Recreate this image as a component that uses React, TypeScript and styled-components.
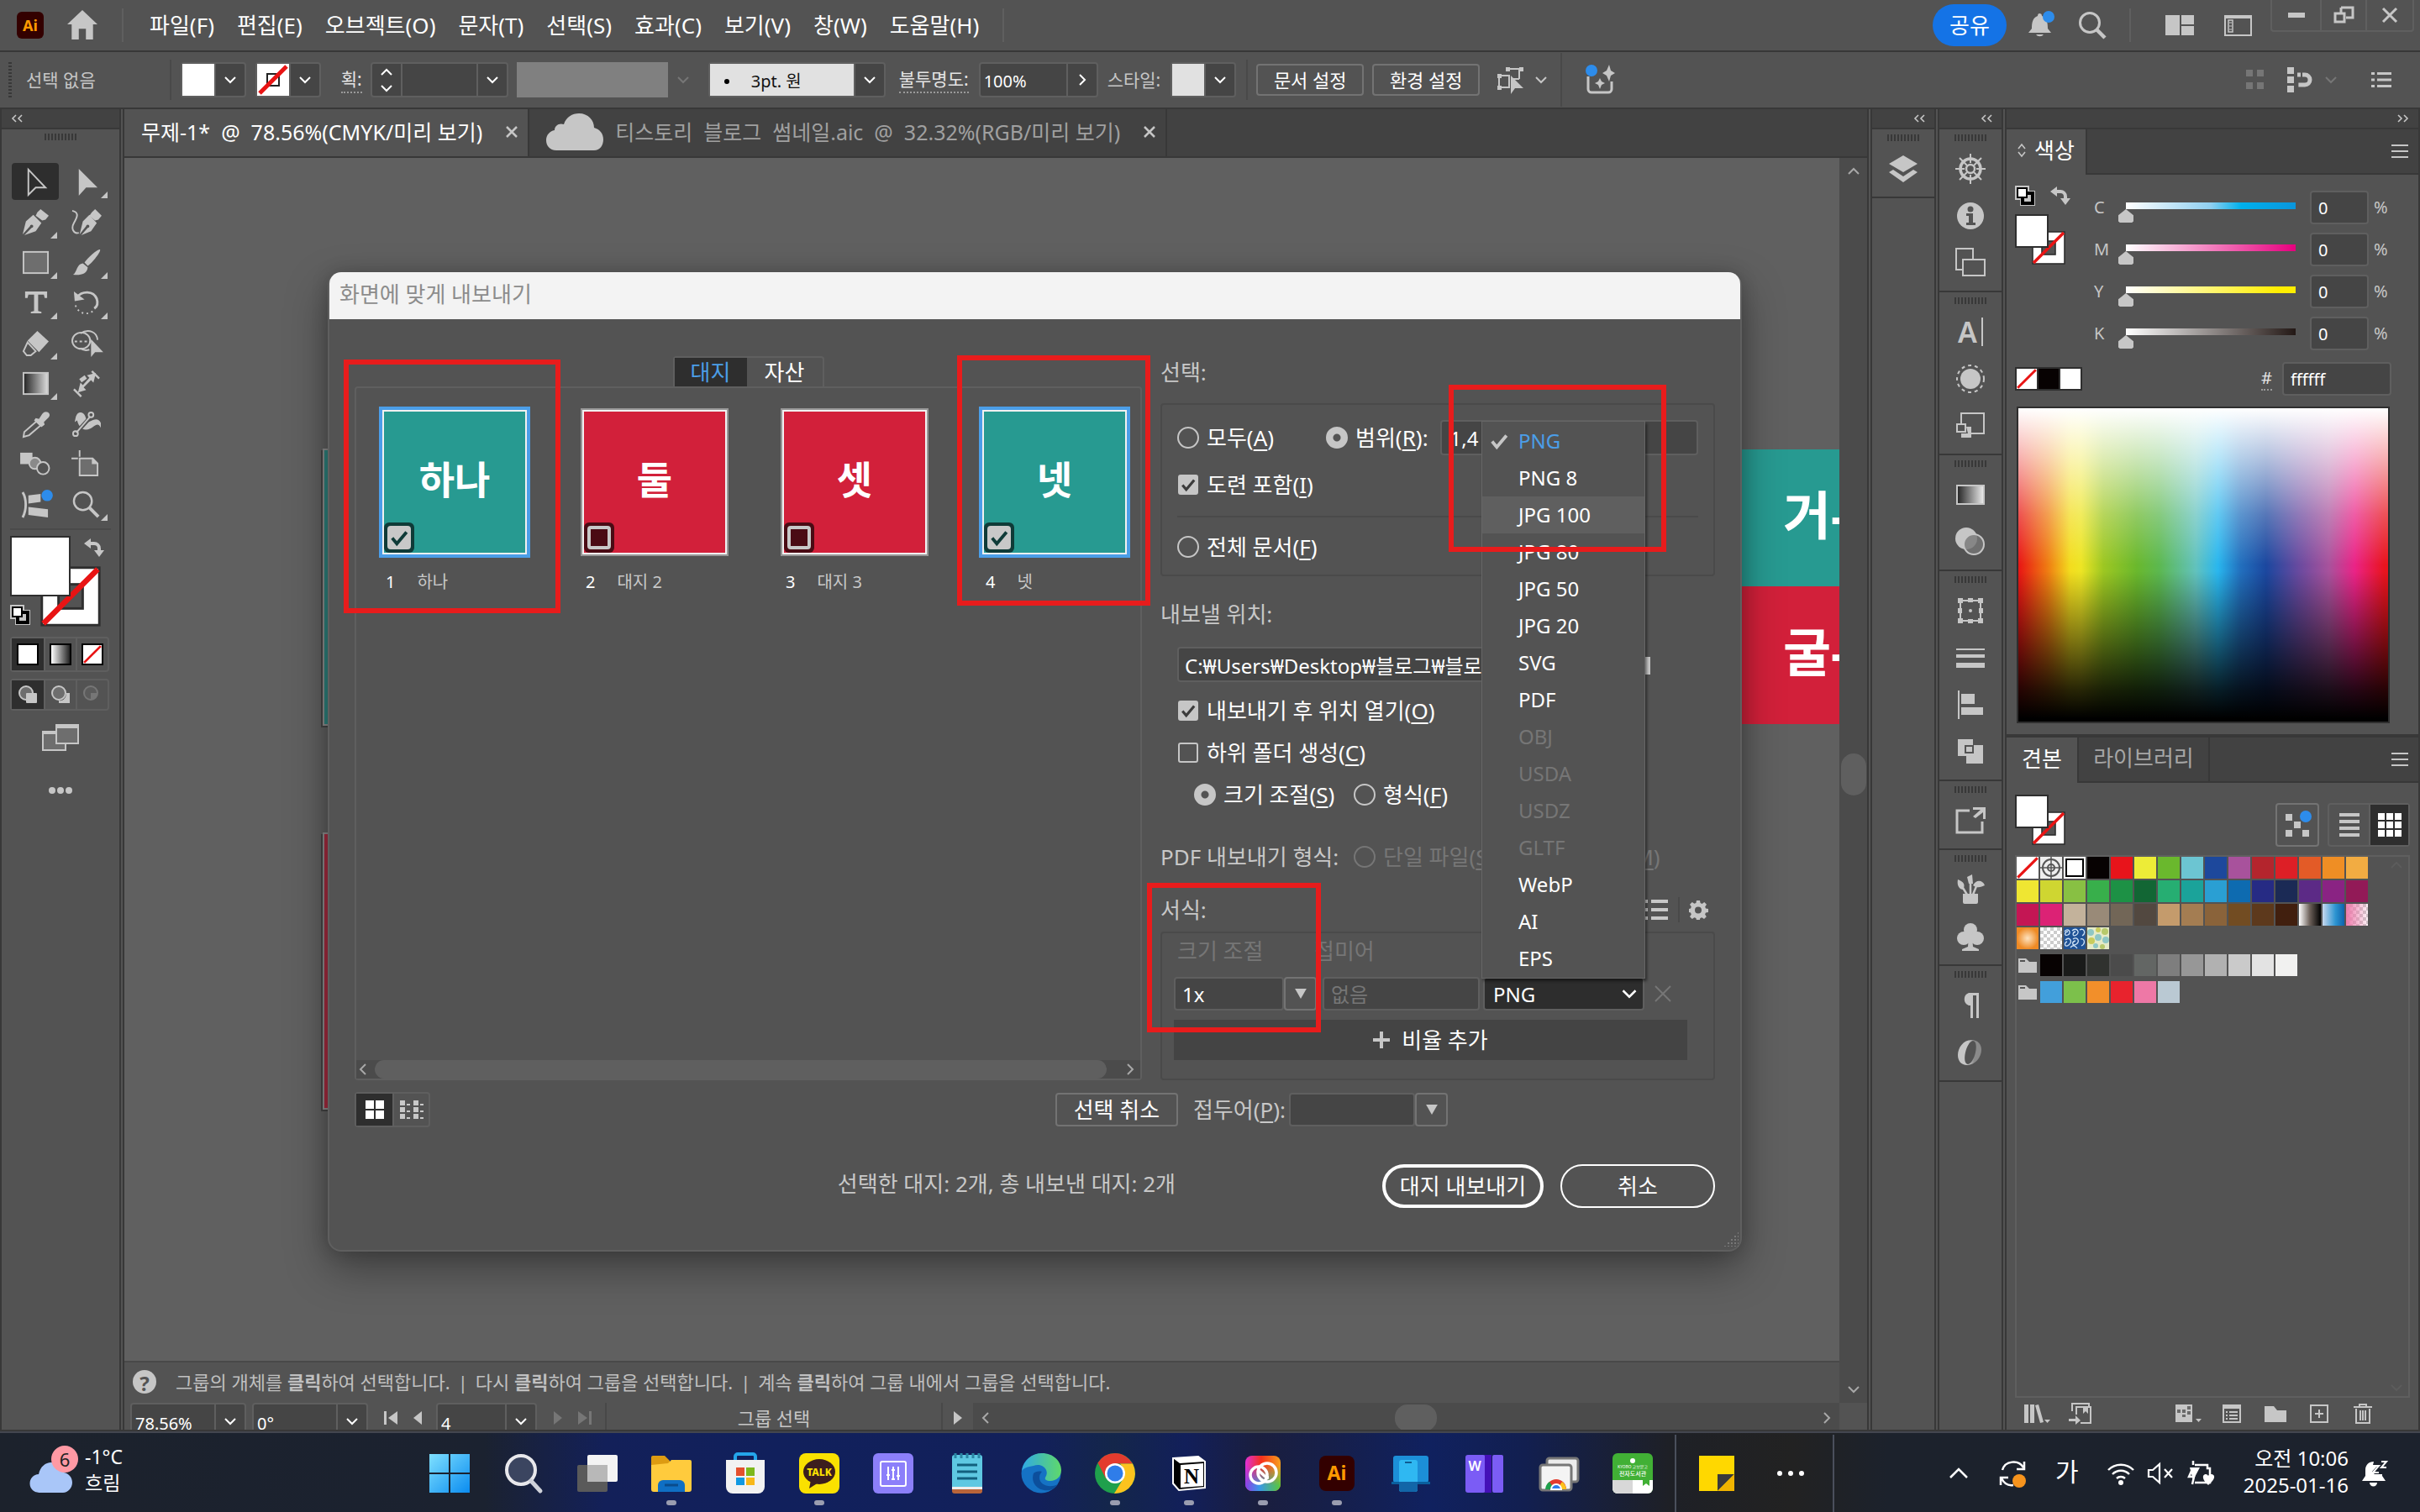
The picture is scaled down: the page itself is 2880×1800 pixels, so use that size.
import React, { useState } from 'react';
import styled, { createGlobalStyle, css } from 'styled-components';

/* ---------- theme ---------- */
const c = {
  panel: '#535353',
  dark: '#424242',
  field: '#454545',
  line: '#383838',
  edge: '#5f5f5f',
  edgeLight: '#737373',
  canvas: '#606060',
  track: '#4b4b4b',
  pressed: '#2e2e2e',
  icon: '#c6c6c6',
  label: '#c8c8c8',
  dim: '#767676',
  white: '#ffffff',
  teal: '#279a91',
  crimson: '#d2203a',
  accent: '#4b9ee8',
  marker: '#e81c1c',
};
const font = `"Noto Sans", "Noto Sans CJK KR", sans-serif`;

const Global = createGlobalStyle`
  *, *::before, *::after { box-sizing: border-box; }
  body { margin: 0; background: ${c.panel}; font-family: ${font}; color: ${c.white}; overflow: hidden; }
  button, input, select { font: inherit; color: inherit; margin: 0; padding: 0; border: 0; background: none; border-radius: 0; outline: none; }
  svg { display: block; flex: none; }
  u { text-underline-offset: 4px; text-decoration-thickness: 2px; }
`;

/* ---------- shared parts ---------- */
const Svg = styled.svg<{ $w?: number; $h?: number }>`
  width: ${p => p.$w ?? 34}px;
  height: ${p => p.$h ?? p.$w ?? 34}px;
  fill: currentColor;
  overflow: visible;
`;
type IcoProps = { w?: number; h?: number; box?: string; children: React.ReactNode };
const Ico = ({ w = 34, h, box, children }: IcoProps) => (
  <Svg $w={w} $h={h} viewBox={box ?? '0 0 34 34'} aria-hidden="true">{children}</Svg>
);
const Chevron = ({ w = 16, dir = 'down' }: { w?: number; dir?: 'down' | 'up' | 'left' | 'right' }) => {
  const d = { down: 'M2 5l6 6 6-6', up: 'M2 11l6-6 6 6', left: 'M11 2L5 8l6 6', right: 'M5 2l6 6-6 6' }[dir];
  return <Ico w={w} box="0 0 16 16"><path d={d} fill="none" stroke="currentColor" strokeWidth="2" /></Ico>;
};
const Arrows = ({ flip = false }: { flip?: boolean }) => (
  <Ico w={14} h={10} box="0 0 14 10">
    <path d={flip ? 'M1 1l4 4-4 4M8 1l4 4-4 4' : 'M6 1L2 5l4 4M13 1L9 5l4 4'} fill="none" stroke="currentColor" strokeWidth="1.6" />
  </Ico>
);
const Gripper = styled.div`
  width: 38px;
  height: 8px;
  background: repeating-linear-gradient(90deg, ${c.line} 0 2px, transparent 2px 4px);
`;
const NoneMark = ({ w, h }: { w: number; h: number }) => (
  <Ico w={w} h={h} box="0 0 40 40"><path d="M2 38L38 2" stroke="#e81414" strokeWidth="5" /></Ico>
);
const MenuLines = () => (
  <Ico w={20} h={16} box="0 0 20 16"><path d="M0 1h20M0 8h20M0 15h20" stroke="currentColor" strokeWidth="2" /></Ico>
);

/* ---------- app frame ---------- */
const Frame = styled.div`
  display: flex;
  flex-direction: column;
  height: 100vh;
  position: relative;
  overflow: hidden;
`;

const MenuBar = styled.header`
  display: flex;
  align-items: center;
  height: 62px;
  padding: 0 7px 0 20px;
  background: ${c.panel};
  border-bottom: 2px solid ${c.line};
  color: ${c.icon};
`;
const AiLogo = styled.div`
  display: grid;
  place-items: center;
  width: 32px;
  height: 32px;
  border-radius: 6px;
  background: #330000;
  color: #ff9a00;
  font: 700 18px/1 "Noto Sans", sans-serif;
`;
const VRule = styled.div<{ $h?: number; $l?: number; $r?: number; $c?: string }>`
  width: 2px;
  height: ${p => p.$h ?? 40}px;
  margin: 0 ${p => p.$r ?? 0}px 0 ${p => p.$l ?? 0}px;
  background: ${p => p.$c ?? c.edge};
`;
const Menus = styled.nav`
  display: flex;
  gap: 27px;
`;
const MenuItem = styled.button`
  font-size: 26px;
  line-height: 36px;
  color: ${c.white};
  white-space: nowrap;
`;
const Push = styled.div`flex: 1;`;
const IconButton = styled.button<{ $w?: number; $h?: number; $ml?: number; $dim?: boolean }>`
  display: grid;
  place-items: center;
  flex: none;
  width: ${p => p.$w ?? 36}px;
  height: ${p => p.$h ?? 36}px;
  margin-left: ${p => p.$ml ?? 0}px;
  color: ${p => (p.$dim ? c.dim : c.icon)};
`;
const ShareButton = styled.button`
  width: 88px;
  height: 50px;
  border-radius: 25px;
  background: #1473e6;
  color: ${c.white};
  font-size: 26px;
  line-height: 36px;
`;
const WindowButtons = styled.div`
  display: grid;
  grid-template-columns: 57px 54px 56px;
  align-self: flex-start;
  height: 38px;
  margin-left: 20px;
  border: 2px solid ${c.edge};
  border-top: 0;
  border-radius: 0 0 4px 4px;
  button { display: grid; place-items: center; }
  button + button { border-left: 2px solid ${c.edge}; }
`;

/* ---------- control bar ---------- */
const ControlBar = styled.div`
  display: flex;
  align-items: center;
  height: 68px;
  padding: 0 32px 0 10px;
  border-bottom: 2px solid ${c.line};
  background: ${c.panel};
  color: ${c.icon};
  font-size: 21px;
  line-height: 30px;
  white-space: nowrap;
`;
const DotGrip = styled.div`
  width: 4px;
  height: 42px;
  margin-right: 17px;
  background: repeating-linear-gradient(180deg, ${c.line} 0 2px, transparent 2px 4px);
`;
const Combo = styled.div<{ $ml?: number; $h?: number }>`
  display: flex;
  height: ${p => p.$h ?? 42}px;
  margin-left: ${p => p.$ml ?? 0}px;
  border: 2px solid ${c.edge};
  border-radius: 4px;
  background: ${c.field};
  flex: none;
`;
const ComboButton = styled.button`
  display: grid;
  place-items: center;
  width: 36px;
  border-left: 2px solid ${c.edge};
  color: ${c.white};
`;
const ComboSwatch = styled.div<{ $bg?: string }>`
  display: grid;
  place-items: center;
  width: 38px;
  background: ${p => p.$bg ?? c.white};
`;
const ComboInput = styled.input<{ $w: number }>`
  width: ${p => p.$w}px;
  padding: 4px 4px 0;
  font-size: 20px;
  color: ${c.white};
`;
const Stepper = styled.div`
  display: grid;
  grid-template-rows: 1fr 1fr;
  width: 36px;
  border-right: 2px solid ${c.edge};
  color: ${c.white};
  button { display: grid; place-items: center; }
`;
const Dotted = styled.label<{ $ml: number }>`
  margin-left: ${p => p.$ml}px;
  color: #e4e4e4;
  border-bottom: 2px dotted #9a9a9a;
`;
const GrayBox = styled.div`
  width: 180px;
  height: 42px;
  margin-left: 10px;
  background: #808080;
`;
const BrushPreview = styled.div`
  display: flex;
  align-items: center;
  gap: 26px;
  width: 171px;
  padding: 4px 0 0 17px;
  background: #e1e1e1;
  color: #111;
  font-size: 20px;
  &::before { content: ''; width: 6px; height: 6px; border-radius: 50%; background: #000; }
`;
const OutlineButton = styled.button<{ $ml: number }>`
  height: 38px;
  width: 128px;
  margin-left: ${p => p.$ml}px;
  border: 2px solid ${c.edgeLight};
  border-radius: 4px;
  color: ${c.white};
  font-size: 22px;
  line-height: 30px;
`;

/* ---------- main area ---------- */
const Main = styled.main`
  display: flex;
  flex: 1;
  min-height: 0;
  background: ${c.panel};
  border-bottom: 2px solid ${c.line};
`;
const StripHead = styled.div<{ $right?: boolean }>`
  display: flex;
  align-items: center;
  justify-content: ${p => (p.$right ? 'flex-end' : 'flex-start')};
  height: 24px;
  padding: 0 11px;
  background: ${c.dark};
  border-bottom: 2px solid ${c.line};
  color: ${c.icon};
`;
const ToolPanel = styled.aside`
  width: 148px;
  flex: none;
  border-left: 2px solid ${c.line};
  border-right: 6px double ${c.line};
  color: ${c.icon};
`;
const ToolBody = styled.div`
  display: flex;
  flex-direction: column;
  padding: 5px 10px 0;
  ${Gripper} { align-self: center; }
`;
const ToolGrid = styled.div`
  display: grid;
  grid-template-columns: 56px 56px;
  grid-auto-rows: 44px;
  gap: 4px;
  margin: 27px 0 7px 2px;
`;
const Tool = styled.button<{ $on?: boolean; $more?: boolean }>`
  display: grid;
  place-items: center;
  position: relative;
  border-radius: 4px;
  ${p => p.$on && css`background: ${c.pressed};`}
  ${p => p.$more && css`
    &::after {
      content: '';
      position: absolute;
      right: 2px;
      bottom: 2px;
      border: 4px solid transparent;
      border-right-color: ${c.icon};
      border-bottom-color: ${c.icon};
    }`}
`;
const HRule = styled.div`
  height: 2px;
  margin-bottom: 7px;
  background: #4a4a4a;
`;
const FillStack = styled.div<{ $s: number }>`
  position: relative;
  width: ${p => p.$s * 1.5}px;
  height: ${p => p.$s * 1.5}px;
`;
const FillSquare = styled.div<{ $s: number }>`
  position: absolute;
  left: 0;
  top: 0;
  width: ${p => p.$s}px;
  height: ${p => p.$s}px;
  background: #fff;
  border: 2px solid ${c.pressed};
`;
const StrokeSquare = styled.div<{ $s: number }>`
  position: absolute;
  right: 0;
  bottom: 0;
  width: ${p => p.$s}px;
  height: ${p => p.$s}px;
`;
const FillStroke = ({ s }: { s: number }) => (
  <FillStack $s={s}>
    <StrokeSquare $s={s}>
      <Ico w={s} box="0 0 40 40">
        <rect x="1" y="1" width="38" height="38" fill="#fff" stroke="#2e2e2e" strokeWidth="1.6" />
        <rect x="12" y="12" width="16" height="16" fill="#535353" stroke="#2e2e2e" strokeWidth="1.6" />
        <path d="M2 38L38 2" stroke="#e81414" strokeWidth="3.6" />
      </Ico>
    </StrokeSquare>
    <FillSquare $s={s} />
  </FillStack>
);
const SwapIcon = () => (
  <Ico w={24} box="0 0 24 24">
    <path d="M7 7h5a6 6 0 0 1 6 6v3" fill="none" stroke="currentColor" strokeWidth="4" />
    <path d="M0 7l8-6v12zM12 15h12l-6 8z" />
  </Ico>
);
const DefaultIcon = () => (
  <Ico w={24} box="0 0 24 24">
    <rect x="0" y="0" width="17" height="17" />
    <rect x="6" y="6" width="18" height="18" />
    <rect x="9" y="9" width="12" height="12" fill="none" stroke="#000" strokeWidth="4" />
    <rect x="3" y="3" width="11" height="11" fill="#fff" stroke="#000" strokeWidth="2" />
  </Ico>
);
const ToolColors = styled.div`
  display: grid;
  grid-template-columns: 108px;
  position: relative;
  margin-bottom: 12px;
`;
const Corner = styled.button<{ $pos: 'tr' | 'bl' }>`
  position: absolute;
  ${p => (p.$pos === 'tr' ? 'right: 8px; top: 2px;' : 'left: 0; bottom: 2px;')}
  color: ${c.icon};
`;
const Segments = styled.div<{ $h: number }>`
  display: grid;
  grid-template-columns: repeat(3, 1fr);
  width: 118px;
  height: ${p => p.$h}px;
  margin-bottom: 8px;
  border: 2px solid ${c.edge};
  border-radius: 4px;
`;
const Segment = styled.button<{ $on?: boolean }>`
  display: grid;
  place-items: center;
  background: ${p => (p.$on ? c.pressed : 'transparent')};
  & + & { border-left: 2px solid ${c.edge}; }
`;
const Chip = styled.span<{ $bg: string }>`
  display: block;
  width: 26px;
  height: 26px;
  border: 2px solid #000;
  background: ${p => p.$bg};
`;
const CenterButton = styled.button<{ $mt: number }>`
  align-self: center;
  margin-top: ${p => p.$mt}px;
`;

/* ---------- document ---------- */
const Doc = styled.section`
  display: flex;
  flex-direction: column;
  flex: 1;
  min-width: 0;
`;
const Tabs = styled.div`
  display: flex;
  height: 58px;
  background: ${c.dark};
  border-bottom: 2px solid ${c.line};
`;
const DocTab = styled.div<{ $on?: boolean }>`
  display: flex;
  align-items: center;
  padding: 0 12px 2px 20px;
  background: ${p => (p.$on ? c.panel : c.dark)};
  color: ${p => (p.$on ? c.white : '#a0a0a0')};
  border-right: 2px solid ${c.line};
  font-size: 25px;
  line-height: 36px;
  white-space: pre;
`;
const TabClose = styled.button`
  margin-left: 28px;
  color: ${c.icon};
`;
const CloudSlot = styled.div`margin-right: 14px; color: ${c.icon};`;
const DocRow = styled.div`
  display: flex;
  flex: 1;
  min-height: 0;
`;
const DocColumn = styled.div`
  display: flex;
  flex-direction: column;
  flex: 1;
  min-width: 0;
`;
const Canvas = styled.div`
  flex: 1;
  position: relative;
  overflow: hidden;
  background: ${c.canvas};
`;
/* artboards sit on the free canvas at their document positions */
const Artboard = styled.div<{ $x: number; $y: number; $w: number; $h: number; $bg: string; $line?: boolean }>`
  position: absolute;
  left: ${p => p.$x}px;
  top: ${p => p.$y}px;
  width: ${p => p.$w}px;
  height: ${p => p.$h}px;
  display: flex;
  align-items: center;
  padding: 0 0 8px 50px;
  background: ${p => p.$bg};
  ${p => p.$line && css`border: 2px solid #8f8f8f; box-shadow: -2px 2px 0 #444;`}
  font-size: 62px;
  font-weight: 700;
  line-height: 70px;
  white-space: nowrap;
`;
const HintBar = styled.div`
  display: flex;
  align-items: center;
  gap: 9px;
  height: 50px;
  padding: 0 0 2px 10px;
  border-top: 2px solid #494949;
  color: #c0c0c0;
  font-size: 22px;
  line-height: 32px;
  white-space: nowrap;
`;
const HelpDot = styled.span`
  display: grid;
  place-items: center;
  width: 28px;
  height: 28px;
  margin-right: 14px;
  border-radius: 50%;
  background: ${c.icon};
  color: ${c.panel};
  font-size: 24px;
  font-weight: 700;
`;
const VScroll = styled.div`
  display: flex;
  flex-direction: column;
  align-items: center;
  justify-content: space-between;
  width: 33px;
  padding: 8px 0;
  background: ${c.track};
  color: #a8a8a8;
  > div { margin-bottom: 14px; }
`;
const Thumb = styled.div<{ $w: number; $h: number }>`
  width: ${p => p.$w}px;
  height: ${p => p.$h}px;
  border-radius: 15px;
  background: ${c.edge};
`;
const StatusBar = styled.div`
  display: flex;
  align-items: flex-start;
  height: 32px;
  padding-left: 7px;
  overflow: hidden;
  color: ${c.icon};
  font-size: 22px;
`;
const StatusCell = styled.div<{ $w: number; $ml?: number; $rule?: boolean; $dim?: boolean }>`
  display: flex;
  align-items: center;
  justify-content: space-around;
  flex: none;
  width: ${p => p.$w}px;
  height: 36px;
  margin-left: ${p => p.$ml ?? 0}px;
  color: ${p => (p.$dim ? c.dim : c.icon)};
  ${p => p.$rule && css`border-left: 2px solid #484848; border-right: 2px solid #484848; line-height: 30px;`}
`;
const HScroll = styled.div`
  display: grid;
  grid-template-columns: 30px 1fr 30px;
  align-items: center;
  justify-items: center;
  flex: 1;
  height: 36px;
  margin-right: 33px;
  background: ${c.track};
  color: #a8a8a8;
  > div { margin-left: 22px; }
`;

/* ---------- right docks ---------- */
const Dock = styled.aside`
  width: 80px;
  flex: none;
  border-left: 6px double ${c.line};
  color: ${c.icon};
`;
const DockGroup = styled.div`
  display: flex;
  flex-direction: column;
  align-items: center;
  padding: 6px 0 5px;
  border-bottom: 2px solid ${c.line};
  ${Gripper} { margin-bottom: 5px; }
`;
const DockButton = styled.button`
  display: grid;
  place-items: center;
  width: 56px;
  height: 56px;
  color: ${c.icon};
`;
const Panels = styled.aside`
  display: flex;
  flex-direction: column;
  width: 498px;
  flex: none;
  border-left: 6px double ${c.line};
  border-right: 2px solid ${c.line};
  color: ${c.icon};
`;
const PanelTabs = styled.div`
  display: flex;
  height: 54px;
  background: ${c.panel};
`;
const PanelTab = styled.button<{ $w: number; $on?: boolean }>`
  display: flex;
  align-items: center;
  justify-content: center;
  gap: 10px;
  width: ${p => p.$w}px;
  padding-bottom: 4px;
  font-size: 26px;
  line-height: 36px;
  color: ${p => (p.$on ? c.white : '#a6a6a6')};
  background: ${p => (p.$on ? c.panel : c.dark)};
  border: 0 solid ${c.line};
  border-right-width: 2px;
  border-bottom-width: ${p => (p.$on ? 0 : 2)}px;
  svg { color: ${c.icon}; }
`;
const PanelTabRest = styled.div`
  display: flex;
  flex: 1;
  align-items: center;
  justify-content: flex-end;
  padding-right: 12px;
  background: ${c.dark};
  border-bottom: 2px solid ${c.line};
`;
const ColorBody = styled.div`
  display: flex;
  flex-direction: column;
  padding: 19px 10px 13px;
  border-bottom: 4px solid ${c.line};
`;
const ColorTop = styled.div`
  display: grid;
  grid-template-columns: 94px 1fr;
`;
const ColorLeft = styled.div`
  display: flex;
  flex-wrap: wrap;
  align-content: flex-start;
  gap: 10px 18px;
  margin-top: -6px;
`;
const Sliders = styled.div`
  display: grid;
  gap: 10px;
`;
const SliderRow = styled.div`
  display: grid;
  grid-template-columns: 29px 220px 70px 1fr;
  align-items: center;
  height: 40px;
  font-size: 20px;
  line-height: 28px;
  color: ${c.icon};
`;
const Range = styled.input<{ $to: string }>`
  appearance: none;
  width: 220px;
  height: 24px;
  margin-top: 12px;
  background: linear-gradient(90deg, #fff, ${p => p.$to}) center top / calc(100% - 18px) 8px no-repeat;
  &::-webkit-slider-runnable-track { height: 24px; }
  &::-webkit-slider-thumb {
    appearance: none;
    width: 18px;
    height: 16px;
    margin-top: 8px;
    background: ${c.icon};
    clip-path: polygon(50% 0, 100% 45%, 100% 90%, 90% 100%, 10% 100%, 0 90%, 0 45%);
  }
`;
const NumInput = styled.input<{ $w: number }>`
  width: ${p => p.$w}px;
  height: 40px;
  padding: 0 8px;
  border: 2px solid ${c.edge};
  border-radius: 4px;
  background: ${c.field};
  color: ${c.white};
  font-size: 20px;
`;
const Shifted = styled.div`display: flex; gap: 6px; margin-left: 8px; align-items: center;`;
const HexRow = styled.div`
  display: flex;
  align-items: center;
  gap: 12px;
  margin: 14px 22px 13px 0;
  font-size: 20px;
  line-height: 26px;
`;
const TriSwatch = styled.div`
  display: grid;
  grid-template-columns: repeat(3, 1fr);
  gap: 2px;
  width: 80px;
  height: 28px;
  padding: 2px;
  background: ${c.pressed};
`;
const Flat = styled.span<{ $bg: string }>`
  display: grid;
  place-items: center;
  overflow: hidden;
  background: ${p => p.$bg};
`;
const Spectrum = styled.div`
  height: 377px;
  margin: 0 24px 0 2px;
  border: 2px solid ${c.pressed};
  background:
    linear-gradient(180deg, #fff 0%, rgba(255,255,255,0.66) 16%, rgba(255,255,255,0.26) 34%, rgba(255,255,255,0) 50%, rgba(0,0,0,0) 52%, rgba(0,0,0,0.48) 74%, rgba(0,0,0,0.84) 90%, #000 99%),
    linear-gradient(90deg, #e81414 0%, #ef7d12 8%, #f3dc1e 14%, #ede524 17%, #9dc722 23%, #6ab82d 32%, #5cb84f 38%, #62c2bd 48%, #29b6ee 54%, #2270be 60%, #1b479f 67%, #6a4a9f 76%, #a8529c 84%, #ea2386 91%, #e8141e 99%);
`;
const SwatchBody = styled.div`
  display: flex;
  flex-direction: column;
  flex: 1;
  min-height: 0;
  padding: 14px 10px 0;
`;
const SwatchHead = styled.div`
  display: flex;
  justify-content: space-between;
  height: 72px;
`;
const ViewButtons = styled.div`
  display: flex;
  gap: 10px;
  margin-top: 10px;
`;
const BoxedButton = styled.button`
  display: grid;
  place-items: center;
  width: 52px;
  height: 52px;
  border: 2px solid ${c.edgeLight};
  border-radius: 4px;
`;
const Pair = styled.div<{ $w: number; $h: number }>`
  display: grid;
  grid-template-columns: 1fr 1fr;
  width: ${p => p.$w}px;
  height: ${p => p.$h}px;
  border: 2px solid ${c.edge};
  border-radius: 4px;
`;
const SwatchArea = styled.div`
  display: flex;
  justify-content: space-between;
  flex: 1;
  border: 2px solid ${c.edge};
`;
const SwatchRows = styled.div`display: flex; flex-direction: column;`;
const SwatchRow = styled.div<{ $mt?: number }>`
  display: grid;
  grid-template-columns: repeat(15, 26px);
  grid-auto-rows: 26px;
  gap: 2px;
  margin-top: ${p => p.$mt ?? 0}px;
  button { display: grid; place-items: center; overflow: hidden; }
`;
const Swatch = styled.button<{ $bg: string }>`background: ${p => p.$bg};`;
const FaintScroll = styled.div`
  display: flex;
  flex-direction: column;
  justify-content: space-between;
  padding: 2px 6px;
  color: #5c5c5c;
`;
const SwatchFoot = styled.div`
  display: flex;
  align-items: center;
  height: 38px;
  padding: 0 30px 0 8px;
`;

/* ---------- dialog ---------- */
const Dialog = styled.div`
  position: absolute;
  left: 390px;
  top: 324px;
  width: 1683px;
  border: 2px solid ${c.edge};
  border-top: 0;
  border-radius: 16px;
  background: ${c.panel};
  box-shadow: 0 20px 50px rgba(0, 0, 0, 0.36), 0 0 20px rgba(0, 0, 0, 0.18);
  color: ${c.white};
  font-size: 26px;
  line-height: 38px;
  white-space: nowrap;
`;
const DialogTitle = styled.h1`
  height: 56px;
  margin: 0;
  padding: 0 12px;
  border-radius: 14px 14px 0 0;
  background: #f3f3f3;
  color: #8c8c8c;
  font-size: 26px;
  font-weight: 400;
  line-height: 52px;
`;
const DialogBody = styled.form`
  display: flex;
  flex-direction: column;
  padding: 44px 30px 50px;
`;
const Columns = styled.div`
  display: grid;
  grid-template-columns: 1fr 660px;
  gap: 22px;
`;
const LeftColumn = styled.div`display: flex; flex-direction: column; min-width: 0;`;
const KindTabs = styled.div`
  display: grid;
  grid-template-columns: 86px 90px;
  align-self: center;
  height: 36px;
  border: 2px solid ${c.edge};
  border-bottom: 0;
  border-radius: 4px 4px 0 0;
`;
const KindTab = styled.button<{ $on?: boolean }>`
  font-size: 26px;
  line-height: 34px;
  color: ${p => (p.$on ? c.accent : c.white)};
  background: ${p => (p.$on ? c.pressed : 'transparent')};
`;
const ListBox = styled.div`
  display: flex;
  flex-direction: column;
  justify-content: space-between;
  flex: 1;
  border: 2px solid ${c.edge};
  border-radius: 4px;
`;
const Cards = styled.div`
  display: flex;
  gap: 58px;
  padding: 22px 0 0 27px;
`;
const Card = styled.div`
  width: 180px;
`;
const Preview = styled.div<{ $on?: boolean; $bg: string }>`
  position: relative;
  display: grid;
  place-items: center;
  height: ${p => (p.$on ? 180 : 176)}px;
  margin: ${p => (p.$on ? 0 : 2)}px;
  padding-bottom: 8px;
  border: ${p => (p.$on ? `4px solid ${c.accent}` : '2px solid #979797')};
  box-shadow: inset 0 0 0 2px #f1f1f1;
  background: ${p => p.$bg};
  font-size: 46px;
  font-weight: 700;
  line-height: 56px;
`;
const CardCheck = styled.span<{ $bg: string }>`
  position: absolute;
  left: 2px;
  bottom: 2px;
  display: grid;
  place-items: center;
  width: 36px;
  height: 36px;
  border-radius: 6px;
  background: ${p => p.$bg};
  color: ${p => p.$bg};
  > * { grid-area: 1 / 1; }
  svg { pointer-events: none; }
`;
const CardBox = styled.input`
  appearance: none;
  width: 28px;
  height: 28px;
  border: 4px solid #c8c8c8;
  border-radius: 4px;
  &:checked { background: #c8c8c8; }
`;
const CardLabel = styled.div`
  display: flex;
  gap: 26px;
  padding: 15px 0 0 8px;
  font-size: 20px;
  line-height: 28px;
  color: ${c.label};
  b { font-weight: 400; color: ${c.white}; }
`;
const ListScroll = styled.div`
  display: flex;
  align-items: center;
  gap: 6px;
  height: 22px;
  background: ${c.track};
  color: #a8a8a8;
  > div { flex: 1; margin-right: 14px; }
  > svg:last-child { margin-right: 4px; }
`;
const RightColumn = styled.div`display: flex; flex-direction: column;`;
const Caption = styled.div<{ $mt?: number }>`
  display: flex;
  align-items: center;
  height: 38px;
  margin-top: ${p => p.$mt ?? 0}px;
  color: ${c.label};
`;
const Box = styled.div<{ $mt: number; $pad: string }>`
  display: flex;
  flex-direction: column;
  margin-top: ${p => p.$mt}px;
  padding: ${p => p.$pad};
  border: 2px solid #4a4a4a;
  border-radius: 4px;
`;
const Line = styled.div<{ $h?: number; $mt?: number; $pl?: number }>`
  display: flex;
  align-items: center;
  height: ${p => p.$h ?? 34}px;
  margin-top: ${p => p.$mt ?? 0}px;
  padding-left: ${p => p.$pl ?? 0}px;
`;
const Choice = styled.label<{ $w?: number; $dim?: boolean }>`
  display: flex;
  align-items: center;
  gap: 9px;
  ${p => p.$w && css`width: ${p.$w}px;`}
  color: ${p => (p.$dim ? c.dim : 'inherit')};
`;
const Radio = styled.input`
  appearance: none;
  width: 26px;
  height: 26px;
  border: 2px solid ${c.icon};
  border-radius: 50%;
  flex: none;
  &:checked { background: radial-gradient(circle, ${c.panel} 0 4px, ${c.icon} 5px); }
  &:disabled { border-color: ${c.dim}; }
`;
const TickWrap = styled.span`
  display: grid;
  place-items: center;
  width: 26px;
  color: #3c3c3c;
  > * { grid-area: 1 / 1; }
  svg { pointer-events: none; }
`;
const TickBox = styled.input`
  appearance: none;
  width: 24px;
  height: 24px;
  border: 2px solid ${c.icon};
  border-radius: 3px;
  &:checked { background: ${c.icon}; }
`;
const Tick = ({ name, on, children }: { name: string; on?: boolean; children: React.ReactNode }) => (
  <Choice>
    <TickWrap>
      <TickBox type="checkbox" name={name} defaultChecked={on} />
      {on && <CheckMark w={18} />}
    </TickWrap>
    <span>{children}</span>
  </Choice>
);
const CheckMark = ({ w }: { w: number }) => (
  <Ico w={w} box="0 0 20 20"><path d="M2.500 10.500l5 6L18 4" fill="none" stroke="currentColor" strokeWidth="3.500" /></Ico>
);
const Field = styled.input<{ $w?: number; $h?: number; $pad?: number }>`
  ${p => (p.$w ? css`width: ${p.$w}px;` : css`flex: 1; min-width: 0;`)}
  height: ${p => p.$h ?? 42}px;
  padding: 0 ${p => p.$pad ?? 14}px;
  border: 2px solid ${c.edge};
  border-radius: 4px;
  background: ${c.field};
  color: ${c.white};
  font-size: 24px;
  &::placeholder { color: ${c.dim}; opacity: 1; }
`;
const DropButton = styled.button`
  display: grid;
  place-items: center;
  width: 39px;
  height: 40px;
  border: 2px solid ${c.edgeLight};
  border-radius: 4px;
  color: ${c.icon};
  flex: none;
`;
const Triangle = () => <Ico w={14} h={12} box="0 0 16 14"><path d="M0 0h16l-8 14z" /></Ico>;
const SelectWrap = styled.span`
  display: grid;
  align-items: center;
  width: 192px;
  margin: 0 12px 0 4px;
  > * { grid-area: 1 / 1; }
  svg { justify-self: end; margin-right: 8px; pointer-events: none; }
`;
const Select = styled.select`
  appearance: none;
  width: 192px;
  height: 40px;
  padding: 0 10px;
  border: 2px solid ${c.edge};
  border-radius: 4px;
  background: #2d2d2d;
  font-size: 24px;
`;
const AddButton = styled.button`
  display: flex;
  align-items: center;
  justify-content: center;
  gap: 14px;
  height: 48px;
  margin-top: 11px;
  background: #444;
  svg { color: ${c.icon}; }
`;
const Dim = styled.span<{ $w?: number }>`
  color: ${c.dim};
  ${p => p.$w && css`width: ${p.$w}px;`}
`;
const ToolsRow = styled.div`
  display: flex;
  align-items: center;
  height: 42px;
  margin-top: 14px;
  color: ${c.label};
`;
const PlainButton = styled.button`
  width: 146px;
  height: 40px;
  margin: 0 18px 0 auto;
  border: 2px solid ${c.edgeLight};
  border-radius: 4px;
  color: ${c.white};
  line-height: 34px;
`;
const PrefixLabel = styled.label`margin-right: 4px;`;
const PrefixDrop = styled(DropButton)`margin-right: 318px;`;
const Actions = styled.div`
  display: flex;
  justify-content: flex-end;
  align-items: center;
  gap: 20px;
  margin-top: 44px;
`;
const Summary = styled.p`
  margin: 0 226px 6px 0;
  color: ${c.label};
`;
const PillButton = styled.button<{ $w: number; $main?: boolean }>`
  width: ${p => p.$w}px;
  height: 52px;
  border: ${p => (p.$main ? 4 : 2)}px solid ${c.white};
  border-radius: 26px;
  line-height: 36px;
`;
/* floating layers over the dialog */
const FormatMenu = styled.ul`
  position: absolute;
  left: 1371px;
  top: 177px;
  width: 195px;
  margin: 0;
  padding: 1px 0 1px;
  list-style: none;
  border: 1px solid #666;
  background: ${c.panel};
  box-shadow: 2px 3px 3px rgba(0, 0, 0, 0.45);
`;
const FormatItem = styled.li<{ $hot?: boolean }>`
  background: ${p => (p.$hot ? c.edge : 'transparent')};
`;
const FormatButton = styled.button<{ $on?: boolean }>`
  display: grid;
  grid-template-columns: 34px 1fr;
  align-items: center;
  width: 100%;
  height: 44px;
  padding-left: 9px;
  text-align: left;
  font-size: 24px;
  line-height: 34px;
  color: ${p => (p.$on ? c.accent : c.white)};
  svg { color: ${c.icon}; }
  &:disabled { color: ${c.dim}; }
`;
const Marker = styled.div<{ $x: number; $y: number; $w: number; $h: number }>`
  position: absolute;
  left: ${p => p.$x}px;
  top: ${p => p.$y}px;
  width: ${p => p.$w}px;
  height: ${p => p.$h}px;
  border: 6px solid ${c.marker};
  pointer-events: none;
`;
const ResizeGrip = styled.div`
  position: absolute;
  right: 2px;
  bottom: 4px;
  width: 18px;
  height: 18px;
  background: radial-gradient(circle, #787878 1px, transparent 1px) 0 0 / 4px 4px;
  clip-path: polygon(100% 0, 100% 100%, 0 100%);
`;

/* ---------- taskbar ---------- */
const Taskbar = styled.footer`
  display: flex;
  align-items: center;
  height: 96px;
  flex: none;
  padding: 2px 38px 0 36px;
  border-top: 2px solid #43464f;
  background: linear-gradient(90deg, #1c222c 0%, #1b2230 20%, #132059 25%, #11205c 32%, #12205a 43%, #14264a 46%, #121f5a 49%, #1a1e3e 52%, #161f4a 55%, #10215f 59%, #121f50 63%, #1e2026 69%, #222 74%, #1c222c 78%, #1c222d 100%);
  line-height: 32px;
  white-space: nowrap;
`;
const Weather = styled.div`
  display: flex;
  align-items: center;
  gap: 8px;
  width: 455px;
  padding-bottom: 8px;
  font-size: 23px;
  line-height: 31px;
`;
const WeatherIcon = styled.div`
  position: relative;
  width: 57px;
  height: 58px;
  padding-top: 20px;
`;
const Badge = styled.span`
  position: absolute;
  right: 0;
  top: 0;
  display: grid;
  place-items: center;
  width: 32px;
  height: 32px;
  border-radius: 50%;
  background: #ff99a4;
  color: #222;
  font-size: 22px;
`;
const TaskCell = styled.button<{ $run?: boolean }>`
  display: grid;
  place-items: center;
  position: relative;
  width: 88px;
  height: 92px;
  ${p => p.$run && css`
    &::after {
      content: '';
      position: absolute;
      left: 38px;
      bottom: 8px;
      width: 12px;
      height: 6px;
      border-radius: 3px;
      background: #9a9db0;
    }`}
`;
const TaskRule = styled.div`
  width: 2px;
  height: 92px;
  margin: 0 4px 0 6px;
  background: #4a4f5c;
`;
const Tray = styled.div`
  display: flex;
  align-items: center;
  gap: 34px;
  margin-left: auto;
`;
const TrayGroup = styled.div`display: flex; align-items: center; gap: 15px;`;
const Ime = styled.span`font-size: 30px; line-height: 40px; padding-bottom: 4px;`;
const Clock = styled.time`
  text-align: right;
  padding-bottom: 4px;
  font-size: 24px;
  line-height: 32px;
`;

/* ---------- drawings ---------- */
const st = { fill: 'none', stroke: 'currentColor' } as const;

const tools: { name: string; on?: boolean; more?: boolean; art: React.ReactNode }[] = [
  { name: '선택 도구', on: true, art: <path d="M8 2v31l9-9h12z" {...st} strokeWidth="2" /> },
  { name: '직접 선택 도구', more: true, art: <path d="M8 1v33l9-10h14z" /> },
  { name: '펜 도구', more: true, art: <><path d="M1 32l4-16 9-8 10 10-7 10-14 5 9-9a2 2 0 1 0-2-2z" /><path d="M19 5l4-4 10 8-4 5-4 1-8-6z" /></> },
  { name: '곡률 도구', art: <><path d="M9 32l4-16 8-8 9 10-7 10-12 5 8-9a2 2 0 1 0-2-2z" /><path d="M24 5l4-4 8 8-4 5-4 1-7-6z" /><path d="M0 3c9 2 6 8 2 15s0 14 6 12" {...st} strokeWidth="2" /></> },
  { name: '사각형 도구', more: true, art: <rect x="2" y="4" width="30" height="26" fill="#6e6e6e" stroke="currentColor" strokeWidth="2" /> },
  { name: '페인트브러시 도구', more: true, art: <><path d="M34 1c2 2-10 17-15 20l-4-4C19 11 31 0 34 1z" /><path d="M13 18l6 5c-1 9-10 10-18 9 5-3 4-13 12-14z" /></> },
  { name: '문자 도구', more: true, art: <path d="M4 3h27v8h-3l-1-4h-7v20l4 1v2H11v-2l4-1V7H8l-1 4H4z" /> },
  { name: '회전 도구', more: true, art: <><path d="M6 10c6-8 20-8 24 2 2 6 0 10-3 12" {...st} strokeWidth="3" /><path d="M2 3l1 12 12-2z" /><path d="M4 20c3 10 15 14 24 5" {...st} strokeWidth="2" strokeDasharray="2 4" /></> },
  { name: '지우개 도구', more: true, art: <><path d="M19 2l14 13-12 13L7 14z" /><path d="M7 16l10 11-6 5H6l-4-5z" {...st} strokeWidth="2" /></> },
  { name: '도형 구성 도구', art: <><ellipse cx="11" cy="14" rx="11" ry="10" {...st} strokeWidth="2" /><path d="M10 5c10-6 20-2 21 8M10 23c4 4 8 3 11 2" {...st} strokeWidth="2" /><path d="M3 15h21" {...st} strokeWidth="2" strokeDasharray="3 3" /><path d="M23 12v22l5-6h10z" /></> },
  { name: '그레이디언트 도구', more: true, art: <><defs><linearGradient id="tg"><stop offset="0" stopColor="#222" /><stop offset="1" stopColor="#ddd" /></linearGradient></defs><rect x="2" y="4" width="30" height="26" fill="url(#tg)" stroke="currentColor" strokeWidth="2" /></> },
  { name: '치수 도구', art: <><path d="M2 24l9 9M24 2l9 9" {...st} strokeWidth="2.500" /><path d="M7 28l3-12 3 3L21 10l-3-3 11-3-3 12-3-3-9 9 3 3z" /><rect x="9" y="9" width="8" height="5" transform="rotate(-35 13 11)" /></> },
  { name: '스포이드 도구', art: <><path d="M17 10l4 1 4-6c4-6 12-1 8 4l-6 6 1 3-4 3-9-8z" /><path d="M18 14l5 5L9 31l-7 2 1-6z" {...st} strokeWidth="2" /></> },
  { name: '퍼펫 뒤틀기 도구', art: <><path d="M4 10C6 0 14 2 16 8s2 8 6 6 10-5 13 2v6c-4-8-7-2-13 1-9 4-14-2-16-10l-3 2z" /><path d="M4 29L23 8" stroke="#535353" strokeWidth="5" /><path d="M5 28L22 8" {...st} strokeWidth="2" /><circle cx="4" cy="29" r="3" {...st} strokeWidth="2" /><circle cx="23" cy="6" r="3" {...st} strokeWidth="2" /></> },
  { name: '블렌드 도구', art: <><rect x="-2" y="3" width="15" height="14" /><circle cx="16" cy="16" r="7" fill="#8a8a8a" stroke="currentColor" strokeWidth="2" /><circle cx="26" cy="22" r="7.500" fill="#535353" stroke="currentColor" strokeWidth="2" /></> },
  { name: '대지 도구', art: <><path d="M9 0v8M-1 10h8" {...st} strokeWidth="2" /><path d="M9 10h16l6 6v15H9z" fill="#6e6e6e" stroke="currentColor" strokeWidth="2" /><path d="M24 9v8h8z" /></> },
  { name: '개체 상호 연결 도구', art: <><path d="M1 2c5 8 5 22 0 31" {...st} strokeWidth="3" /><path d="M8 6l15-2v10L8 16zM8 20l24 3v10L8 30z" /><circle cx="31" cy="6" r="7" fill="#2d8ceb" /></> },
  { name: '돋보기 도구', more: true, art: <><circle cx="13" cy="13" r="11" {...st} strokeWidth="2.500" /><path d="M21 21l11 11" {...st} strokeWidth="4" /></> },
];

const dockGroups: { name: string; art: React.ReactNode }[][] = [
  [
    { name: '탐색기', art: <><circle cx="17" cy="17" r="12" {...st} strokeWidth="3.500" /><circle cx="17" cy="17" r="5" {...st} strokeWidth="2.500" /><path d="M17 -1v11M17 24v11M-1 17h11M24 17h11M4 4l9 9M21 21l9 9M30 4l-9 9M13 21l-9 9" {...st} strokeWidth="2" /></> },
    { name: '정보', art: <><circle cx="17" cy="17" r="16" /><circle cx="17" cy="9" r="3.500" fill="#535353" /><path d="M12 14h8v11h3v3H12v-3h3v-8h-3z" fill="#535353" /></> },
    { name: '대지', art: <><path d="M8 25H0V0h20v13" {...st} strokeWidth="2" /><rect x="8" y="13" width="26" height="19" {...st} strokeWidth="2" /></> },
  ],
  [
    { name: '문자', art: <><text x="2" y="30" fontSize="34" fontWeight="600" fontFamily="Noto Sans">A</text><path d="M31 0v34" {...st} strokeWidth="2" /></> },
    { name: '모양', art: <><circle cx="17" cy="17" r="12" /><circle cx="17" cy="17" r="16" {...st} strokeWidth="2" strokeDasharray="4 4" /></> },
    { name: '에셋 내보내기', art: <><path d="M6 14V2h27v24H17" {...st} strokeWidth="2" /><rect x="1" y="15" width="10" height="9" {...st} strokeWidth="2" /><path d="M12 18h6v13H6v-5h8z" /></> },
  ],
  [
    { name: '그레이디언트', art: <><defs><linearGradient id="dg"><stop offset="0" stopColor="#222" /><stop offset="1" stopColor="#eee" /></linearGradient></defs><rect x="1" y="6" width="32" height="22" fill="url(#dg)" stroke="currentColor" strokeWidth="2" /></> },
    { name: '투명도', art: <><circle cx="12" cy="13" r="13" /><circle cx="21" cy="20" r="12" fill="#777" fillOpacity=".8" stroke="currentColor" strokeWidth="2" /></> },
  ],
  [
    { name: '변형', art: <><rect x="5" y="5" width="24" height="24" {...st} strokeWidth="2" /><path d="M2 2h6v6H2zM14 2h6v5h-6zM26 2h6v6h-6zM2 14h5v6H2zM27 14h5v6h-5zM2 26h6v6H2zM14 27h6v5h-6zM26 26h6v6h-6z" /><circle cx="17" cy="17" r="2" /></> },
    { name: '획', art: <path d="M0 6h34v2H0zM0 13h34v4H0zM0 23h34v6H0z" /> },
    { name: '정렬', art: <path d="M2 0h2v34H2zM6 4h16v12H6zM6 20h26v9H6z" /> },
    { name: '패스파인더', art: <><path d="M2 2h18v7h12v22H12v-9H2z" /><rect x="11" y="10" width="9" height="8" fill="#c6c6c6" stroke="#535353" strokeWidth="2" /></> },
  ],
  [{ name: '내보내기', art: <><path d="M16 5H1v26h30V18" {...st} strokeWidth="3" /><path d="M20 1h15v14h-3V7L23 14l-3-2 9-8h-9z" /></> }],
  [
    { name: '브러쉬', art: <><path d="M8 22h18v10a2 2 0 0 1-2 2H10a2 2 0 0 1-2-2zM13 2l6-3 1 11h-5zM2 5c8 3 9 7 6 12C2 16 1 10 2 5zM20 12c4-8 12-6 14 0-4 2-9 4-14 0z" /><path d="M8 15l5 8M17 9v14M24 13l-4 10" {...st} strokeWidth="2.500" /></> },
    { name: '심볼', art: <><circle cx="17" cy="9" r="8" /><circle cx="9" cy="19" r="8" /><circle cx="25" cy="19" r="8" /><path d="M15 15h4l1 14 7 3v2H7v-2l7-3z" /></> },
  ],
  [
    { name: '단락', art: <><path d="M15 2h12v30h-3V5h-4v27h-3V17h-2a8 8 0 0 1 0-15z" /></> },
    { name: 'OpenType', art: <><defs><linearGradient id="ot"><stop offset=".45" stopColor="#c6c6c6" /><stop offset=".7" stopColor="#8a8a8a" /></linearGradient></defs><path fill="url(#ot)" fillRule="evenodd" d="M18 2C9 2 2 11 2 20c0 7 4 12 11 12 9 0 17-9 17-18C30 7 26 2 18 2zm2 1c8 1 2 27-6 28-8-1-2-27 6-28z" /></> },
  ],
];

const NoneSwatch = <Ico w={26} box="0 0 40 40"><rect width="40" height="40" fill="#fff" /><path d="M2 38L38 2" stroke="#e81414" strokeWidth="5" /></Ico>;
const RegSwatch = <Ico w={26} box="0 0 26 26"><rect width="26" height="26" fill="#eee" /><circle cx="13" cy="13" r="10" fill="none" stroke="#555" strokeWidth="2" /><circle cx="13" cy="13" r="4" fill="none" stroke="#555" strokeWidth="2" /><path d="M13 0v26M0 13h26" stroke="#555" strokeWidth="1.500" /></Ico>;
const WhiteSwatch = <Ico w={26} box="0 0 26 26"><rect width="26" height="26" fill="#fff" /><rect x="3" y="3" width="20" height="20" fill="#fff" stroke="#000" strokeWidth="2" /></Ico>;
const FolderSwatch = <Ico w={24} h={20} box="0 0 24 20"><path d="M1 2h9l4 4h9v13H1z" fill="#c6c6c6" /><path d="M3 5h6" stroke="#535353" strokeWidth="2" /></Ico>;
const WeaveSwatch = <Ico w={26} box="0 0 26 26"><rect width="26" height="26" fill="#1f5296" /><path d="M1 5c4-6 9 2 4 4s-4-4 0-4M10 4c5-5 10 2 5 5s-5-3-1-4M19 3c5-3 8 4 3 7M2 15c5-5 9 2 4 6s-6-3-2-4M11 14c5-4 9 3 4 6s-6-3-1-4M20 14c4-2 7 5 1 8M8 24c3-4 6-2 8 1" fill="none" stroke="#cfe2f5" strokeWidth="1.300" /></Ico>;
const LeafSwatch = <Ico w={26} box="0 0 26 26"><rect width="26" height="26" fill="#e6ebc8" /><circle cx="4" cy="6" r="4" fill="#8fc7c4" /><circle cx="13" cy="3" r="3" fill="#c9cc5c" /><circle cx="21" cy="5" r="4" fill="#b7c96b" /><circle cx="13" cy="12" r="4" fill="#8fc7c4" /><circle cx="22" cy="15" r="4" fill="#8fc7c4" /><circle cx="5" cy="16" r="4" fill="#c9cc5c" /><circle cx="10" cy="22" r="3" fill="#8fc7c4" /><circle cx="18" cy="23" r="3" fill="#b7c96b" /></Ico>;

const checker = 'repeating-conic-gradient(#ccc 0 25%, #fff 0 50%) 0 0 / 8px 8px';
type Sw = string | React.ReactElement;
const swatchRows: Sw[][] = [
  [NoneSwatch, RegSwatch, WhiteSwatch, '#070202', '#e8141b', '#edec37', '#6ab82d', '#6cc5d2', '#1d489c', '#a8529c', '#b4252d', '#dd1f26', '#e35b27', '#ef8e24', '#f2ac42'],
  ['#efe632', '#cfd631', '#88c043', '#38af4b', '#1d9145', '#126634', '#26ae72', '#1ba39a', '#2a9fd3', '#0e6bb0', '#262b84', '#1b2a55', '#5c2a86', '#8a2383', '#921a57'],
  ['#c41654', '#dc2275', '#c3b29b', '#998a78', '#726657', '#524840', '#c49b6c', '#a47d52', '#8a633a', '#724c22', '#5d391c', '#411f0e', 'linear-gradient(90deg,#fff,#6b5f58 50%,#000)', 'linear-gradient(90deg,#c8d8ee,#2b93d0 60%,#0f62ab)', `linear-gradient(90deg,#ee7bab,rgba(238,123,171,.1)), ${checker}`],
  ['radial-gradient(circle,#fde3c0,#ef8a24 70%)', checker, WeaveSwatch, LeafSwatch],
];
const grays: Sw[] = [FolderSwatch, '#070202', '#1a1b1a', '#30322f', '#4b4b4b', '#636664', '#7e7e7e', '#979797', '#b1b1b1', '#cacaca', '#e3e3e3', '#f1f1f0'];
const brights: Sw[] = [FolderSwatch, '#429fdb', '#7cc04b', '#f28f2a', '#e8232d', '#ee78a6', '#bac9d3'];
const Swatches = ({ items, mt }: { items: Sw[]; mt?: number }) => (
  <SwatchRow $mt={mt}>
    {items.map((s, i) => typeof s === 'string'
      ? <Swatch key={i} $bg={s} aria-label={`견본 ${i + 1}`} />
      : <Swatch key={i} $bg="transparent" aria-label={`견본 ${i + 1}`}>{s}</Swatch>)}
  </SwatchRow>
);

const formats = ['PNG', 'PNG 8', 'JPG 100', 'JPG 80', 'JPG 50', 'JPG 20', 'SVG', 'PDF', 'OBJ', 'USDA', 'USDZ', 'GLTF', 'WebP', 'AI', 'EPS'];
const unavailable = ['OBJ', 'USDA', 'USDZ', 'GLTF'];
const boards = [
  { n: 1, title: '하나', name: '하나', bg: c.teal, shade: '#0f3b38', on: true },
  { n: 2, title: '둘', name: '대지 2', bg: c.crimson, shade: '#4a0b14', on: false },
  { n: 3, title: '셋', name: '대지 3', bg: c.crimson, shade: '#4a0b14', on: false },
  { n: 4, title: '넷', name: '넷', bg: c.teal, shade: '#0f3b38', on: true },
];
const inks = [
  { k: 'C', to: '#8fcff0 50%, #00b0ec 68%, #0a96dc' },
  { k: 'M', to: '#e6007e' },
  { k: 'Y', to: '#ffee00 90%' },
  { k: 'K', to: '#231815' },
];

const B = '0 0 48 48';
const taskIcons: { name: string; run?: boolean; art: React.ReactNode }[] = [
  { name: '시작', art: <><defs><linearGradient id="win" x2="1" y2="1"><stop offset="0" stopColor="#7fe0ff" /><stop offset="1" stopColor="#0a8cf0" /></linearGradient></defs><path d="M0 1h23v22H0zM25 1h23v22H25zM0 25h23v22H0zM25 25h23v22H25z" fill="url(#win)" /></> },
  { name: '검색', art: <><circle cx="21" cy="20" r="17" fill="#3b4560" stroke="#e8e8ec" strokeWidth="4" /><path d="M33 33l11 12" stroke="#cfd2da" strokeWidth="5" strokeLinecap="round" /></> },
  { name: '작업 보기', art: <><rect x="12" y="2" width="36" height="32" rx="2" fill="#f4f4f4" /><rect x="0" y="14" width="36" height="32" rx="2" fill="#5a5a5a" /><path d="M12 14h24v20H12z" fill="#b8b8b8" /></> },
  { name: '파일 탐색기', run: true, art: <><path d="M0 5a2 2 0 0 1 2-2h14l6 6v10H0z" fill="#dd9b12" /><path d="M0 14l20-2 4-4h22a2 2 0 0 1 2 2v33a3 3 0 0 1-3 3H3a3 3 0 0 1-3-3z" fill="#ffcb3d" /><path d="M8 38a6 6 0 0 1 6-6h20a6 6 0 0 1 6 6v8H8z" fill="#0f6fc4" /><path d="M16 38h16" stroke="#0a4c8c" strokeWidth="3" /></> },
  { name: '스토어', art: <><path d="M12 12V4a3 3 0 0 1 3-3h18a3 3 0 0 1 3 3v8" fill="none" stroke="#24a5ea" strokeWidth="4" /><path d="M1 8h46v32a8 8 0 0 1-8 8H9a8 8 0 0 1-8-8z" fill="#f2f2f2" /><path d="M13 17h10v10H13z" fill="#e4502e" /><path d="M25 17h10v10H25z" fill="#7db81d" /><path d="M13 29h10v9H13z" fill="#1199e2" /><path d="M25 29h10v9H25z" fill="#f8b819" /></> },
  { name: '카카오톡', run: true, art: <><rect width="48" height="48" rx="8" fill="#fae100" /><ellipse cx="24" cy="22" rx="19" ry="15" fill="#3c1e1e" /><path d="M14 32l-2 10 11-7z" fill="#3c1e1e" /><text x="24" y="27" textAnchor="middle" fontSize="12" fontWeight="800" fontFamily="Noto Sans" fill="#fae100">TALK</text></> },
  { name: '믹서', art: <><rect width="48" height="48" rx="6" fill="#8c7ffa" /><rect x="9" y="10" width="30" height="29" rx="2" fill="none" stroke="#fff" strokeWidth="2" /><path d="M18 16v16M24 16v16M30 16v16M16 26h4M22 20h4M22 31h4M28 27h4" stroke="#fff" strokeWidth="2" /></> },
  { name: '메모장', art: <><rect x="6" y="2" width="36" height="44" rx="3" fill="#5ec8e2" /><path d="M6 42h36v3a3 3 0 0 1-3 3H9a3 3 0 0 1-3-3z" fill="#b9653a" /><path d="M6 40h36v3H6z" fill="#eee" /><path d="M12 14h24M12 22h24M12 30h24" stroke="#12607e" strokeWidth="3" /><path d="M10 0v6M17 0v6M24 0v6M31 0v6M38 0v6" stroke="#2a87a4" strokeWidth="3" /></> },
  { name: 'Edge', art: <><defs><linearGradient id="ed" x1="0" y1="0" x2="1" y2="0"><stop offset="0" stopColor="#2fa9e6" /><stop offset="1" stopColor="#5fd86a" /></linearGradient></defs><circle cx="24" cy="24" r="23.500" fill="#1572c4" /><path d="M1 21C3 8 13 0 25 0c14 0 23 10 23 20 0 8-6 13-13 13-5 0-7-2-6-4 6-9-4-18-14-14C8 16 3 18 1 21z" fill="url(#ed)" /><path d="M15 24c-4 12 6 22 19 20 5-1 8-4 10-7-10 5-22 1-22-8 0-4 2-6 3-7-4-1-8 0-10 2z" fill="#0c4f9c" /></> },
  { name: 'Chrome', run: true, art: <><circle cx="24" cy="24" r="24" fill="#1fa04c" /><path d="M24 0a24 24 0 0 1 21 12.500H24L13 30 3.500 11.500A24 24 0 0 1 24 0z" fill="#e33b2e" /><path d="M45 12.500A24 24 0 0 1 23 48l11-18V18l-4-5.500z" fill="#fcc31e" /><circle cx="24" cy="24" r="12" fill="#fff" /><circle cx="24" cy="24" r="9.500" fill="#2f7de9" /></> },
  { name: 'Notion', run: true, art: <><path d="M5 6l30-2 8 6v31l-31 3-7-8z" fill="#000" stroke="#fff" strokeWidth="2" /><path d="M5 6l30-2 8 6-30 2z" fill="#fff" /><path d="M14 14l27-2v27l-27 2z" fill="#fff" /><text x="27" y="36" textAnchor="middle" fontSize="25" fontWeight="700" fontFamily="Liberation Serif" fill="#000">N</text></> },
  { name: 'Creative Cloud', run: true, art: <><defs><linearGradient id="cc1"><stop offset="0" stopColor="#e030d8" /><stop offset=".45" stopColor="#f5301c" /><stop offset="1" stopColor="#f8a01c" /></linearGradient><linearGradient id="cc2"><stop offset="0" stopColor="#8a40e8" /><stop offset=".4" stopColor="#3a98e8" /><stop offset="1" stopColor="#58c838" /></linearGradient><linearGradient id="cc3" x2="0" y2="1"><stop offset=".3" stopColor="#fff" stopOpacity="0" /><stop offset=".8" stopColor="#fff" /></linearGradient><mask id="ccm"><rect width="48" height="48" fill="url(#cc3)" /></mask></defs><rect x="3" y="3" width="42" height="42" rx="8" fill="url(#cc1)" /><rect x="3" y="3" width="42" height="42" rx="8" fill="url(#cc2)" mask="url(#ccm)" /><circle cx="19" cy="26" r="10" fill="none" stroke="#fff" strokeWidth="3.500" /><circle cx="29" cy="23" r="11" fill="none" stroke="#fff" strokeWidth="3.500" /><path d="M17 20c6 2 8 9 14 9" fill="none" stroke="#fff" strokeWidth="3.500" /></> },
  { name: 'Illustrator', run: true, art: <><rect x="3" y="3" width="42" height="42" rx="8" fill="#330000" /><text x="24" y="32" textAnchor="middle" fontSize="23" fontWeight="700" fontFamily="Noto Sans" fill="#ff9a00">Ai</text></> },
  { name: '휴대폰과 연결', art: <><rect x="3" y="3" width="42" height="32" rx="3" fill="#1c8fd8" /><path d="M1 34h46v3H1z" fill="#0a5f9e" /><rect x="10" y="8" width="22" height="38" rx="3" fill="#2fb8f2" /><path d="M10 34h22v9a3 3 0 0 1-3 3H13a3 3 0 0 1-3-3z" fill="#1266a8" /><path d="M17 11h8" stroke="#0f5c92" strokeWidth="2" /></> },
  { name: '문서', art: <><rect x="1" y="2" width="24" height="45" rx="3" fill="#7b5cf5" /><rect x="24" y="2" width="8" height="45" fill="#4410b8" /><rect x="33" y="2" width="13" height="45" rx="2" fill="#7b5cf5" /><text x="12" y="21" textAnchor="middle" fontSize="16" fontWeight="600" fontFamily="Noto Sans" fill="#fff">W</text></> },
  { name: '원격 데스크톱', art: <><rect x="10" y="6" width="37" height="28" rx="3" fill="#ececec" stroke="#777" strokeWidth="3" /><rect x="2" y="14" width="37" height="30" rx="3" fill="#f4f4f4" stroke="#777" strokeWidth="3" /><path d="M9 43a12 12 0 0 1 24 0z" fill="#e33b2e" /><path d="M8 43a12 12 0 0 1 5-9l6 9z" fill="#1fa04c" /><path d="M33 43a12 12 0 0 0-5-9l-6 9z" fill="#fcc31e" /><path d="M15 43a6 6 0 0 1 12 0z" fill="#2f7de9" stroke="#fff" strokeWidth="2" /></> },
  { name: '전자도서관', art: <><rect width="48" height="48" rx="6" fill="#41b035" /><path d="M0 32h48v10a6 6 0 0 1-6 6H6a6 6 0 0 1-6-6z" fill="#fff" /><path d="M0 32h24v16H6a6 6 0 0 1-6-6z" fill="#d8d8d8" /><path d="M36 32h8v7l-4-3-4 3z" fill="#41b035" /><circle cx="24" cy="9" r="3" fill="#fff" /><text x="24" y="18" textAnchor="middle" fontSize="5" fontFamily="Noto Sans CJK KR" fill="#fff">KYOBO 교보문고</text><text x="24" y="27" textAnchor="middle" fontSize="7" fontWeight="500" fontFamily="Noto Sans CJK KR" fill="#fff">전자도서관</text></> },
];

/* ---------- sections ---------- */
const menus = ['파일(F)', '편집(E)', '오브젝트(O)', '문자(T)', '선택(S)', '효과(C)', '보기(V)', '창(W)', '도움말(H)'];

const TopMenu = () => (
  <MenuBar>
    <AiLogo>Ai</AiLogo>
    <IconButton $ml={26} $w={40} aria-label="홈">
      <Ico w={36}><path d="M17 0L0 16h5v17h8V21h8v12h8V16h5z" /></Ico>
    </IconButton>
    <VRule $l={27} $r={31} />
    <Menus>{menus.map(m => <MenuItem key={m}>{m}</MenuItem>)}</Menus>
    <VRule $l={28} />
    <Push />
    <ShareButton>공유</ShareButton>
    <IconButton $ml={24} aria-label="알림">
      <Ico w={34}><path d="M14 3c2 0 3 1 3 3 6 2 7 8 7 15l4 5H1l4-5c0-7 1-13 7-15 0-2 1-3 2-3zM10 28h9a5 4 0 0 1-9 0z" /><circle cx="25" cy="7" r="7" fill="#2d8ceb" /></Ico>
    </IconButton>
    <IconButton $ml={24} aria-label="검색">
      <Ico w={34}><circle cx="14" cy="14" r="11.500" {...st} strokeWidth="3" /><path d="M22 22l10 10" {...st} strokeWidth="4.500" /></Ico>
    </IconButton>
    <VRule $l={26} $r={40} />
    <IconButton aria-label="문서 정렬">
      <Ico w={34} h={24} box="0 0 34 24"><path d="M0 0h17v24H0zM19 0h15v11H19zM19 13h15v11H19z" /></Ico>
    </IconButton>
    <IconButton $ml={34} aria-label="작업 영역">
      <Ico w={34} h={26} box="0 0 34 26"><rect x="1" y="2" width="31" height="23" {...st} strokeWidth="2" /><path d="M1 1h31v4H1z" /><path d="M5 7h5v14H5z" {...st} strokeWidth="1.500" /><path d="M6 10h3M6 14h3M6 18h3" {...st} /></Ico>
    </IconButton>
    <WindowButtons>
      <button aria-label="최소화"><Ico w={20} h={6} box="0 0 20 6"><path d="M0 0h20v6H0z" /></Ico></button>
      <button aria-label="이전 크기로"><Ico w={24} h={20} box="0 0 24 20"><path d="M9 1h14v12h-8M9 1v6" {...st} strokeWidth="3" /><rect x="2" y="8" width="11" height="10" {...st} strokeWidth="3" /></Ico></button>
      <button aria-label="닫기"><Ico w={18} box="0 0 18 18"><path d="M1 1l16 16M17 1L1 17" {...st} strokeWidth="3" /></Ico></button>
    </WindowButtons>
  </MenuBar>
);

const Controls = () => (
  <ControlBar>
    <DotGrip />
    <span>선택 없음</span>
    <VRule $l={88} $r={11} $h={48} $c="#494949" />
    <Combo><ComboSwatch /><ComboButton aria-label="칠"><Chevron /></ComboButton></Combo>
    <Combo $ml={11}>
      <ComboSwatch><Ico w={38} box="0 0 38 38"><rect x="12" y="12" width="14" height="14" fill="none" stroke="#222" strokeWidth="2" /><path d="M3 35L35 3" stroke="#e81414" strokeWidth="5" /></Ico></ComboSwatch>
      <ComboButton aria-label="획 색상"><Chevron /></ComboButton>
    </Combo>
    <Dotted $ml={24} htmlFor="strokeWeight">획:</Dotted>
    <Combo $ml={10}>
      <Stepper>
        <button aria-label="늘리기"><Chevron dir="up" /></button>
        <button aria-label="줄이기"><Chevron /></button>
      </Stepper>
      <ComboInput id="strokeWeight" $w={88} />
      <ComboButton aria-label="획 두께"><Chevron /></ComboButton>
    </Combo>
    <GrayBox />
    <IconButton $dim aria-label="가변 폭 프로필"><Chevron /></IconButton>
    <Combo $ml={12}>
      <BrushPreview>3pt. 원</BrushPreview>
      <ComboButton aria-label="브러쉬"><Chevron /></ComboButton>
    </Combo>
    <Dotted $ml={16} htmlFor="opacity">불투명도:</Dotted>
    <Combo $ml={12}>
      <ComboInput id="opacity" $w={102} defaultValue="100%" />
      <ComboButton aria-label="불투명도 슬라이더"><Chevron dir="right" /></ComboButton>
    </Combo>
    <VRule $l={9} $c="transparent" />
    <span>스타일:</span>
    <Combo $ml={12}><ComboSwatch $bg="#e1e1e1" /><ComboButton aria-label="그래픽 스타일"><Chevron /></ComboButton></Combo>
    <VRule $l={12} $h={48} $c="#494949" />
    <OutlineButton $ml={10}>문서 설정</OutlineButton>
    <OutlineButton $ml={10}>환경 설정</OutlineButton>
    <IconButton $ml={20} aria-label="유사 오브젝트 선택">
      <Ico w={34}><path d="M12 4h14v12M2 12h12v14H2zM26 16h-8" {...st} strokeWidth="2" /><path d="M16 12v22l5-7h10z" /><path d="M10 2h5v5h-5zM26 2h5v5h-5zM0 10h5v5H0zM0 24h5v5H0z" /></Ico>
    </IconButton>
    <IconButton $w={34} aria-label="선택 옵션"><Chevron /></IconButton>
    <VRule $l={6} $r={28} $h={64} $c="#494949" />
    <IconButton aria-label="AI 생성">
      <Ico w={36} box="0 0 36 36"><path d="M3 14v15a4 4 0 0 0 4 4h20a4 4 0 0 0 4-4V20" {...st} strokeWidth="3" /><path d="M28 0l2 7 5 3-5 3-2 7-3-7-5-3 5-3zM17 16l2 4 4 2-4 2-2 5-2-5-4-2 4-2z" /><circle cx="7" cy="7" r="7" fill="#2d8ceb" /></Ico>
    </IconButton>
    <Push />
    <IconButton $dim aria-label="픽셀에 정렬">
      <Ico w={30} box="0 0 30 30"><path d="M4 3h8v8H4zM17 3h8v8h-8zM4 18h8v8H4zM17 18h8v8h-8z" /><path d="M14.500 0v30M0 14.500h30" stroke="#535353" strokeWidth="1" /></Ico>
    </IconButton>
    <IconButton $ml={18} aria-label="스냅">
      <Ico w={34}><path d="M1 2h8v8H1zM1 13h8v8H1zM1 24h8v8H1z" /><path d="M13 11h9a6 6 0 0 1 0 12h-9" {...st} strokeWidth="5" strokeDasharray="4 2 29 2" /></Ico>
    </IconButton>
    <IconButton $dim aria-label="스냅 옵션"><Chevron /></IconButton>
    <IconButton $ml={28} $w={28} aria-label="패널 메뉴">
      <Ico w={24} h={18} box="0 0 24 18"><path d="M7 1.500h17M7 9h17M7 16.500h17M0 1.500h4M0 9h4M0 16.500h4" {...st} strokeWidth="3" /></Ico>
    </IconButton>
  </ControlBar>
);

const ToolsPanel = () => (
  <ToolPanel>
    <StripHead><Arrows /></StripHead>
    <ToolBody>
      <Gripper />
      <ToolGrid>
        {tools.map(t => <Tool key={t.name} $on={t.on} $more={t.more} aria-label={t.name}><Ico w={33}>{t.art}</Ico></Tool>)}
      </ToolGrid>
      <HRule />
      <ToolColors>
        <FillStroke s={72} />
        <Corner $pos="tr" aria-label="칠과 획 교체"><SwapIcon /></Corner>
        <Corner $pos="bl" aria-label="초기값 칠과 획"><DefaultIcon /></Corner>
      </ToolColors>
      <Segments $h={42}>
        <Segment $on aria-label="색상"><Chip $bg="#fff" /></Segment>
        <Segment aria-label="그레이디언트"><Chip $bg="linear-gradient(90deg,#fff,#222)" /></Segment>
        <Segment aria-label="없음"><Chip $bg="#fff"><NoneMark w={22} h={22} /></Chip></Segment>
      </Segments>
      <Segments $h={38}>
        {['표준 그리기', '배경 그리기', '내부 그리기'].map((n, i) => (
          <Segment key={n} $on={i === 0} aria-label={n}>
            <Ico w={22} box="0 0 22 22">
              <g opacity={i === 2 ? 0.3 : 1}>
                <circle cx="9" cy="9" r="8" fill="#6e6e6e" stroke="currentColor" strokeWidth="2" />
                {i === 0 && <rect x="9" y="9" width="13" height="12" rx="1" />}
                {i === 1 && <path d="M18 9h4v12H9v-3c5 1 9-3 9-9z" />}
                {i === 2 && <path d="M9 9h8c0 5-3 8-8 8z" />}
              </g>
            </Ico>
          </Segment>
        ))}
      </Segments>
      <CenterButton $mt={8} aria-label="화면 모드">
        <Ico w={44} h={32} box="0 0 44 32"><rect x="1" y="9" width="27" height="22" fill="#6e6e6e" stroke="currentColor" strokeWidth="2" /><rect x="17" y="1" width="26" height="22" fill="#6e6e6e" stroke="currentColor" strokeWidth="2" /><path d="M17 1h26v4H17zM1 9h15v3H1z" /></Ico>
      </CenterButton>
      <CenterButton $mt={43} aria-label="도구 모음 편집">
        <Ico w={28} h={8} box="0 0 28 8"><circle cx="4" cy="4" r="4" /><circle cx="14" cy="4" r="4" /><circle cx="24" cy="4" r="4" /></Ico>
      </CenterButton>
    </ToolBody>
  </ToolPanel>
);

const CloseX = () => <Ico w={14} box="0 0 14 14"><path d="M1 1l12 12M13 1L1 13" {...st} strokeWidth="2.500" /></Ico>;

const DocumentArea = () => (
  <Doc>
    <Tabs>
      <DocTab $on>{'무제-1*  @  78.56%(CMYK/미리 보기)'}<TabClose aria-label="닫기"><CloseX /></TabClose></DocTab>
      <DocTab>
        <CloudSlot><Ico w={68} h={44} box="0 0 68 44"><path d="M12 44C4 44 0 38 0 32s4-11 10-12c0-5 5-9 11-7C24 4 31 0 39 0c11 0 18 8 18 17 7 2 11 7 11 14s-4 13-11 13z" /></Ico></CloudSlot>
        {'티스토리  블로그  썸네일.aic  @  32.32%(RGB/미리 보기)'}
        <TabClose aria-label="닫기"><CloseX /></TabClose>
      </DocTab>
    </Tabs>
    <DocRow>
      <DocColumn>
        <Canvas>
          <Artboard $x={236} $y={346} $w={400} $h={330} $bg="#2f857f" $line />
          <Artboard $x={236} $y={803} $w={400} $h={330} $bg="#a82c40" $line />
          <Artboard $x={1924} $y={347} $w={300} $h={163} $bg={c.teal}>거-</Artboard>
          <Artboard $x={1924} $y={510} $w={300} $h={164} $bg={c.crimson}>굴-</Artboard>
        </Canvas>
        <HintBar>
          <HelpDot>?</HelpDot>
          <span>그룹의 개체를 <b>클릭</b>하여 선택합니다.</span>
          <span>|</span>
          <span>다시 <b>클릭</b>하여 그룹을 선택합니다.</span>
          <span>|</span>
          <span>계속 <b>클릭</b>하여 그룹 내에서 그룹을 선택합니다.</span>
        </HintBar>
      </DocColumn>
      <VScroll><Chevron dir="up" /><Thumb $w={30} $h={50} /><Chevron /></VScroll>
    </DocRow>
    <StatusBar>
      <Combo $h={44}>
        <ComboInput $w={98} defaultValue="78.56%" aria-label="확대/축소" /><ComboButton aria-label="확대/축소 목록"><Chevron /></ComboButton>
      </Combo>
      <Combo $h={44} $ml={7}>
        <ComboInput $w={98} defaultValue="0°" aria-label="회전" /><ComboButton aria-label="회전 목록"><Chevron /></ComboButton>
      </Combo>
      <StatusCell $w={62} $ml={11}>
        <Ico w={18} h={16} box="0 0 18 16"><path d="M0 0h3v16H0zM16 0v16L5 8z" /></Ico>
        <Ico w={12} h={16} box="0 0 12 16"><path d="M11 0v16L1 8z" /></Ico>
      </StatusCell>
      <Combo $h={44} $ml={8}>
        <ComboInput $w={80} defaultValue="4" aria-label="대지 번호" /><ComboButton aria-label="대지 목록"><Chevron /></ComboButton>
      </Combo>
      <StatusCell $w={62} $ml={11} $dim>
        <Ico w={12} h={16} box="0 0 12 16"><path d="M1 0v16l10-8z" /></Ico>
        <Ico w={18} h={16} box="0 0 18 16"><path d="M15 0h3v16h-3zM2 0v16l11-8z" /></Ico>
      </StatusCell>
      <StatusCell $w={402} $ml={8} $rule>그룹 선택</StatusCell>
      <StatusCell $w={36}><Ico w={12} h={16} box="0 0 12 16"><path d="M1 0v16l10-8z" /></Ico></StatusCell>
      <HScroll><Chevron dir="left" /><Thumb $w={50} $h={32} /><Chevron dir="right" /></HScroll>
    </StatusBar>
  </Doc>
);

const ColorPanel = () => (
  <>
    <PanelTabs>
      <PanelTab $w={96} $on>
        <Ico w={10} h={16} box="0 0 10 16"><path d="M1 6l4-5 4 5M1 10l4 5 4-5" {...st} strokeWidth="1.600" /></Ico>색상
      </PanelTab>
      <PanelTabRest><MenuLines /></PanelTabRest>
    </PanelTabs>
    <ColorBody>
      <ColorTop>
        <ColorLeft><DefaultIcon /><SwapIcon /><FillStroke s={40} /></ColorLeft>
        <Sliders>
          {inks.map(i => (
            <SliderRow key={i.k}>
              <label htmlFor={`ink${i.k}`}>{i.k}</label>
              <Range $to={i.to} type="range" min={0} max={100} defaultValue={0} aria-label={`${i.k} 슬라이더`} />
              <Shifted><NumInput $w={70} id={`ink${i.k}`} defaultValue="0" /><span>%</span></Shifted>
            </SliderRow>
          ))}
        </Sliders>
      </ColorTop>
      <HexRow>
        <TriSwatch><Flat $bg="#fff"><NoneMark w={24} h={24} /></Flat><Flat $bg="#070202" /><Flat $bg="#fff" /></TriSwatch>
        <Push />
        <Dotted $ml={0} htmlFor="hex">#</Dotted>
        <NumInput $w={130} id="hex" defaultValue="ffffff" />
      </HexRow>
      <Spectrum />
    </ColorBody>
  </>
);

const SwatchPanel = () => (
  <>
    <PanelTabs>
      <PanelTab $w={86} $on>견본</PanelTab>
      <PanelTab $w={156}>라이브러리</PanelTab>
      <PanelTabRest><MenuLines /></PanelTabRest>
    </PanelTabs>
    <SwatchBody>
      <SwatchHead>
        <FillStroke s={40} />
        <ViewButtons>
          <BoxedButton aria-label="색상 테마">
            <Ico w={30} box="0 0 30 30"><path d="M1 2h8v8H1zM11 11h8v8h-8zM1 21h8v8H1zM21 21h8v8h-8z" /><circle cx="25" cy="5" r="7" fill="#2d8ceb" /></Ico>
          </BoxedButton>
          <Pair $w={98} $h={52}>
            <Segment aria-label="목록 보기"><Ico w={24} h={28} box="0 0 24 28"><path d="M0 2h24M0 10h24M0 18h24M0 26h24" {...st} strokeWidth="4" /></Ico></Segment>
            <Segment $on aria-label="축소판 보기"><Ico w={28} box="0 0 28 28"><path fill="#fff" d="M0 0h8v8H0zM10 0h8v8h-8zM20 0h8v8h-8zM0 10h8v8H0zM10 10h8v8h-8zM20 10h8v8h-8zM0 20h8v8H0zM10 20h8v8h-8zM20 20h8v8h-8z" /></Ico></Segment>
          </Pair>
        </ViewButtons>
      </SwatchHead>
      <SwatchArea>
        <SwatchRows>
          {swatchRows.map((r, i) => <Swatches key={i} items={r} mt={i ? 2 : 0} />)}
          <Swatches items={grays} mt={6} />
          <Swatches items={brights} mt={6} />
        </SwatchRows>
        <FaintScroll><Chevron dir="up" /><Chevron /></FaintScroll>
      </SwatchArea>
      <SwatchFoot>
        <IconButton $w={36} aria-label="견본 라이브러리"><Ico w={32} h={26} box="0 0 32 26"><path d="M1 2h5v22H1zM8 2h5v22H8zM14 3l4-1 6 21-4 1zM25 20h7l-3.500 4z" /></Ico></IconButton>
        <IconButton $w={36} $ml={16} aria-label="라이브러리에 추가"><Ico w={28} h={26} box="0 0 28 26"><path d="M4 10V1h20v3M9 14V5h17v19H14" {...st} strokeWidth="2" /><path d="M17 5h6v8l-3-3-3 3zM0 19h8v-4l6 6-6 5v-4H0z" /></Ico></IconButton>
        <Push />
        <IconButton $w={36} aria-label="견본 종류"><Ico w={30} h={24} box="0 0 30 24"><path d="M0 1h20v21H0z" /><path d="M2 7h4v4H2zM8 7h4v4H8zM14 3h4v4h-4zM8 13h4v3H8zM14 9h4v4h-4z" fill="#6a6a6a" /><path d="M24 18h7l-3.500 4z" /></Ico></IconButton>
        <IconButton $w={36} $ml={16} aria-label="견본 옵션"><Ico w={22} h={22} box="0 0 22 22"><rect x="1" y="1" width="20" height="20" {...st} strokeWidth="2" /><path d="M1 1h20v4H1zM4 8h2v2H4zM8 8h10v2H8zM4 12h2v2H4zM8 12h10v2H8zM4 16h2v2H4zM8 16h10v2H8z" /></Ico></IconButton>
        <IconButton $w={36} $ml={16} aria-label="새 색상 그룹"><Ico w={26} h={20} box="0 0 26 20"><path d="M0 1h11l4 5h11v14H0z" /></Ico></IconButton>
        <IconButton $w={36} $ml={16} aria-label="새 견본"><Ico w={22} h={22} box="0 0 22 22"><rect x="1" y="1" width="20" height="20" {...st} strokeWidth="2" /><path d="M11 6v10M6 11h10" {...st} strokeWidth="2" /></Ico></IconButton>
        <IconButton $w={36} $ml={16} aria-label="견본 삭제"><Ico w={22} h={24} box="0 0 22 24"><path d="M0 4h22M7 4V1h8v3M3 6v17h16V6M8 8v12M11 8v12M14 8v12" {...st} strokeWidth="2" /></Ico></IconButton>
        <VRule $r={6} $c="transparent" />
      </SwatchFoot>
    </SwatchBody>
  </>
);

const ExportDialog = () => {
  const [format, setFormat] = useState('PNG');
  return (
    <Dialog role="dialog" aria-labelledby="dialogTitle">
      <DialogTitle id="dialogTitle">화면에 맞게 내보내기</DialogTitle>
      <DialogBody onSubmit={e => e.preventDefault()}>
        <Columns>
          <LeftColumn>
            <KindTabs><KindTab type="button" $on>대지</KindTab><KindTab type="button">자산</KindTab></KindTabs>
            <ListBox>
              <Cards>
                {boards.map(b => (
                  <Card key={b.n}>
                    <Preview $on={b.on} $bg={b.bg}>
                      {b.title}
                      <CardCheck $bg={b.shade}>
                        <CardBox type="checkbox" defaultChecked={b.on} aria-label={`대지 ${b.n} 선택`} />
                        {b.on && <CheckMark w={22} />}
                      </CardCheck>
                    </Preview>
                    <CardLabel><b>{b.n}</b><span>{b.name}</span></CardLabel>
                  </Card>
                ))}
              </Cards>
              <ListScroll><Chevron dir="left" /><Thumb $w={874} $h={22} /><Chevron dir="right" /></ListScroll>
            </ListBox>
          </LeftColumn>
          <RightColumn>
            <Caption>선택:</Caption>
            <Box $mt={18} $pad="18px 18px 16px">
              <Line $h={42}>
                <Choice $w={177}><Radio type="radio" name="range" /><span>모두(<u>A</u>)</span></Choice>
                <Choice><Radio type="radio" name="range" defaultChecked /><span>범위(<u>R</u>):</span></Choice>
                <VRule $l={12} $c="transparent" />
                <Field defaultValue="1,4" aria-label="범위" $pad={10} />
              </Line>
              <Line $mt={18}><Tick name="bleed" on>도련 포함(<u>I</u>)</Tick></Line>
              <Line $h={20} />
              <HRule />
              <Line $mt={11}><Choice><Radio type="radio" name="range" /><span>전체 문서(<u>F</u>)</span></Choice></Line>
            </Box>
            <Caption $mt={26}>내보낼 위치:</Caption>
            <Line $h={42} $mt={20} $pl={20}>
              <Field $w={520} $pad={7} defaultValue="C:₩Users₩Desktop₩블로그₩블로그 썸네일" aria-label="내보낼 위치" />
              <IconButton $ml={14} $w={30} type="button" aria-label="폴더 선택"><Ico w={28} h={24} box="0 0 28 24"><path d="M0 0h11l3 3h14v21H0z" /></Ico></IconButton>
            </Line>
            <Line $h={50} $mt={9} $pl={20}><Tick name="open" on>내보내기 후 위치 열기(<u>O</u>)</Tick></Line>
            <Line $h={50} $pl={20}><Tick name="sub">하위 폴더 생성(<u>C</u>)</Tick></Line>
            <Line $h={50} $pl={40}>
              <Choice $w={190}><Radio type="radio" name="sub" defaultChecked /><span>크기 조절(<u>S</u>)</span></Choice>
              <Choice><Radio type="radio" name="sub" /><span>형식(<u>F</u>)</span></Choice>
            </Line>
            <Caption $mt={30}>
              <Choice as="span" $w={230}>PDF 내보내기 형식:</Choice>
              <Choice $dim $w={188}><Radio type="radio" name="pdf" disabled /><span>단일 파일(<u>S</u>)</span></Choice>
              <Choice $dim><Radio type="radio" name="pdf" disabled /><span>다중 파일(<u>M</u>)</span></Choice>
            </Caption>
            <Caption $mt={25}>
              서식:
              <Push />
              <Ico w={30} h={24} box="0 0 30 24"><path d="M10 2h20M10 12h20M10 22h20M0 2h6M0 12h6M0 22h6" {...st} strokeWidth="4" /></Ico>
              <VRule $l={12} $r={10} $h={30} $c="#494949" />
              <IconButton $w={24} type="button" aria-label="고급 설정">
                <Ico w={24} box="0 0 24 24"><path fillRule="evenodd" d="M10 1h4l.6 3 2 .9L19.300 3 22 5.800 20.200 8.400l.8 2 3 .6v4l-3 .6-.9 2 1.700 2.600L19 23l-2.600-1.700-2 .8-.5 1.900h-4l-.5-2-2-.8L4.800 23 2 20.200l1.800-2.600-.8-2L1 15v-4l2-.6.8-2L2 5.800 4.800 3l2.600 1.800 2-.8zM12 8.500a4 4 0 1 0 0 8 4 4 0 0 0 0-8z" /></Ico>
              </IconButton>
              <VRule $r={6} $c="transparent" />
            </Caption>
            <Box $mt={7} $pad="4px 31px 22px 14px">
              <Line $pl={4}><Dim $w={163}>크기 조절</Dim><Dim>접미어</Dim></Line>
              <Line $h={40} $mt={14}>
                <Field $w={131} $h={40} $pad={8} defaultValue="1x" aria-label="크기 조절" />
                <DropButton type="button" aria-label="크기 목록"><Triangle /></DropButton>
                <VRule $r={5} $c="transparent" />
                <Field $w={187} $h={40} $pad={8} placeholder="없음" aria-label="접미어" />
                <SelectWrap>
                  <Select aria-label="형식" value={format} onChange={e => setFormat(e.target.value)}>
                    {formats.map(f => <option key={f} disabled={unavailable.includes(f)}>{f}</option>)}
                  </Select>
                  <Chevron w={20} />
                </SelectWrap>
                <IconButton $w={20} $dim type="button" aria-label="제거"><Ico w={20} box="0 0 20 20"><path d="M1 1l18 18M19 1L1 19" {...st} strokeWidth="2" /></Ico></IconButton>
              </Line>
              <AddButton type="button"><Ico w={20} box="0 0 20 20"><path d="M10 0v20M0 10h20" {...st} strokeWidth="4" /></Ico>비율 추가</AddButton>
            </Box>
          </RightColumn>
        </Columns>
        <ToolsRow>
          <Pair $w={90} $h={42}>
            <Segment type="button" $on aria-label="축소판"><Ico w={22} box="0 0 22 22"><path fill="#fff" d="M0 0h10v10H0zM12 0h10v10H12zM0 12h10v10H0zM12 12h10v10H12z" /></Ico></Segment>
            <Segment type="button" aria-label="목록"><Ico w={28} h={24} box="0 0 28 24"><path d="M0 1h6v6H0zM0 9h6v6H0zM0 17h6v6H0zM16 1h6v6h-6zM16 9h6v6h-6zM16 17h6v6h-6zM8 5h4v2H8zM8 13h4v2H8zM8 21h4v2H8zM24 5h4v2h-4zM24 13h4v2h-4zM24 21h4v2h-4z" /></Ico></Segment>
          </Pair>
          <PlainButton type="button">선택 취소</PlainButton>
          <PrefixLabel htmlFor="prefix">접두어(<u>P</u>):</PrefixLabel>
          <Field id="prefix" $w={150} $h={40} />
          <PrefixDrop type="button" aria-label="접두어 목록"><Triangle /></PrefixDrop>
        </ToolsRow>
        <Actions>
          <Summary>선택한 대지: 2개, 총 내보낸 대지: 2개</Summary>
          <PillButton $w={192} $main>대지 내보내기</PillButton>
          <PillButton $w={184} type="button">취소</PillButton>
        </Actions>
      </DialogBody>
      <FormatMenu>
        {formats.map(f => (
          <FormatItem key={f} $hot={f === 'JPG 100'}>
            <FormatButton type="button" $on={f === format} disabled={unavailable.includes(f)} onClick={() => setFormat(f)}>
              <span>{f === format && <CheckMark w={22} />}</span>{f}
            </FormatButton>
          </FormatItem>
        ))}
      </FormatMenu>
      <Marker $x={17} $y={104} $w={258} $h={302} />
      <Marker $x={747} $y={99} $w={230} $h={298} />
      <Marker $x={1332} $y={134} $w={259} $h={199} />
      <Marker $x={973} $y={727} $w={207} $h={178} />
      <ResizeGrip />
    </Dialog>
  );
};

const TaskbarArea = () => (
  <Taskbar>
    <Weather>
      <WeatherIcon>
        <Ico w={50} h={36} box="0 0 50 36"><path d="M11 36a11 11 0 0 1-1-22C12 5 18 0 25 0c8 0 13 5 15 12 6 1 10 6 10 12s-5 12-11 12z" fill="#a9c6f8" /></Ico>
        <Badge>6</Badge>
      </WeatherIcon>
      <div><div>-1°C</div><div>흐림</div></div>
    </Weather>
    {taskIcons.map(t => <TaskCell key={t.name} $run={t.run} aria-label={t.name}><Ico w={48} box={B}>{t.art}</Ico></TaskCell>)}
    <TaskRule />
    <TaskCell aria-label="스티커 메모"><Ico w={42} box="0 0 42 42"><path d="M0 0h42v42H0z" fill="#ffd800" /><path d="M22 42V22h20z" fill="#3a3a3a" /><path d="M22 42l20-20v20z" fill="#f0b400" /></Ico></TaskCell>
    <TaskCell aria-label="더 보기"><Ico w={32} h={6} box="0 0 32 6"><circle cx="3" cy="3" r="3" /><circle cx="16" cy="3" r="3" /><circle cx="29" cy="3" r="3" /></Ico></TaskCell>
    <TaskRule />
    <Tray>
      <Ico w={26} h={16} box="0 0 26 16"><path d="M3 13L13 3l10 10" {...st} strokeWidth="2.500" /></Ico>
      <Ico w={34}><path d="M5 13C8 2 24 0 30 10M31 3v9h-9M3 31v-9h9M4 23c3 6 8 9 14 8" {...st} strokeWidth="2.500" /><circle cx="25" cy="26" r="8" fill="#f7941d" /></Ico>
      <Ime>가</Ime>
      <TrayGroup>
        <Ico w={32} box="0 0 32 32"><path d="M1 12a21 21 0 0 1 30 0M6 17a14 14 0 0 1 20 0M11 22a7.500 7.500 0 0 1 10 0" {...st} strokeWidth="2.500" /><circle cx="16" cy="27" r="3" /></Ico>
        <Ico w={32} box="0 0 32 32"><path d="M2 12h5l8-7v22l-8-7H2zM21 11l9 10M30 11l-9 10" {...st} strokeWidth="2.200" /></Ico>
        <Ico w={34}><path d="M10 7h15v4h3v17H10M7 12l-4 9h6l-2 9M8 2v5" {...st} strokeWidth="2.500" /><path d="M4 10h12L8 25z" /><path d="M20 20c2-3 5-2 6 0 1-2 5-3 7 0 1 4-4 8-7 11-3-3-7-7-6-11z" /></Ico>
      </TrayGroup>
      <TrayGroup>
        <Clock>오전 10:06<br />2025-01-16</Clock>
        <Ico w={32} box="0 0 32 32"><path d="M15 2c-6 0-10 4-10 10v7l-4 6h28l-4-6v-2h-9l-3-3 7-8h-6zM10 27h9a4 4 0 0 1-9 0z" /><path d="M14 7h7l-7 8h7M24 2h6l-6 7h6" {...st} strokeWidth="2" /></Ico>
      </TrayGroup>
    </Tray>
  </Taskbar>
);

export default function App() {
  return (
    <Frame>
      <Global />
      <TopMenu />
      <Controls />
      <Main>
        <ToolsPanel />
        <DocumentArea />
        <Dock>
          <StripHead $right><Arrows /></StripHead>
          <DockGroup>
            <Gripper />
            <DockButton aria-label="레이어"><Ico w={34}><path d="M17 1l17 10-17 10L0 11z" /><path d="M0 21l5-3 12 8 12-8 5 3-17 12z" /></Ico></DockButton>
          </DockGroup>
        </Dock>
        <Dock>
          <StripHead $right><Arrows /></StripHead>
          {dockGroups.map((g, i) => (
            <DockGroup key={i}>
              <Gripper />
              {g.map(d => <DockButton key={d.name} aria-label={d.name}><Ico w={34}>{d.art}</Ico></DockButton>)}
            </DockGroup>
          ))}
        </Dock>
        <Panels>
          <StripHead $right><Arrows flip /></StripHead>
          <ColorPanel />
          <SwatchPanel />
        </Panels>
      </Main>
      <TaskbarArea />
      <ExportDialog />
    </Frame>
  );
}
